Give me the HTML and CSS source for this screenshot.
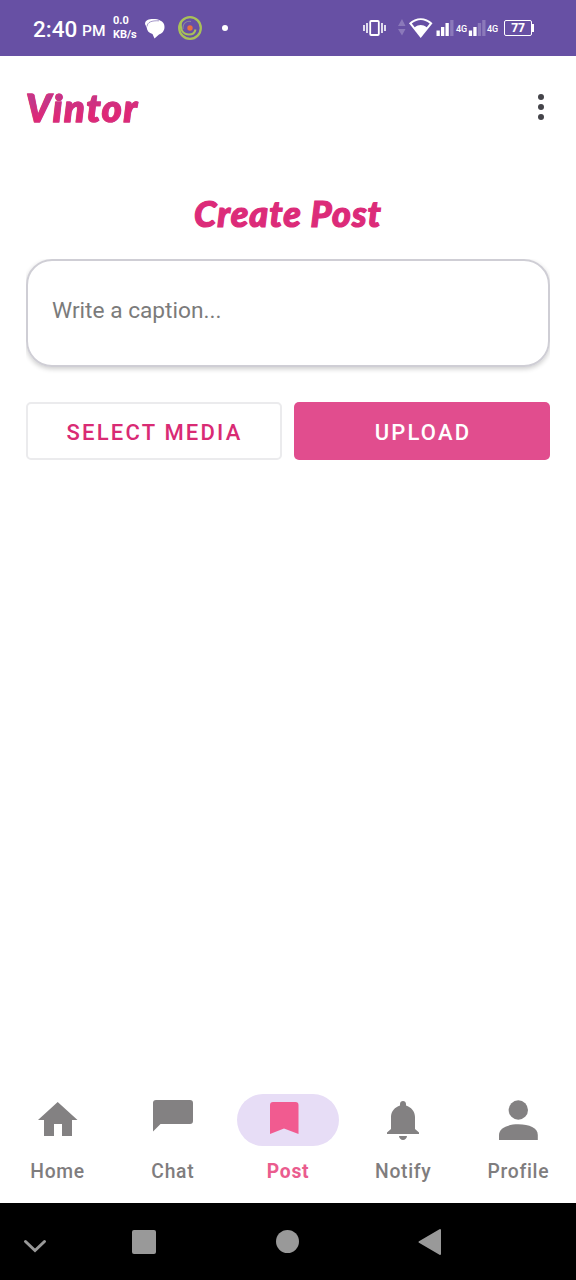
FILE: index.html
```html
<!DOCTYPE html>
<html lang="en">
<head>
<meta charset="utf-8">
<title>Vintor</title>
<link rel="stylesheet" href="styles.css">
</head>
<body>
<div class="screen">
  <header class="status">
    <span class="time">2:40</span>
    <span class="meridiem">PM</span>
    <span class="speed"><span>0.0</span><span>KB/s</span></span>
    <svg class="messages" width="20" height="22" viewBox="0 0 20 22">
      <path fill="#fff" d="M0 6C0 2 4 1 8 1c3 0 5.500 .3 7 1.500C18 3.500 19.500 6 19.500 9c0 4-2.500 6.500-5.500 7.500L9.500 20.500 7.500 16C4 15 2 13 1.700 9.500z"/>
      <path fill="none" stroke="#6750a4" stroke-width=".6" d="M2 8.500C2.500 4 6.500 2.500 14 2.800"/>
    </svg>
    <svg class="spiral" width="26" height="26" viewBox="0 0 26 26">
      <circle cx="13" cy="13" r="10.800" fill="none" stroke="#a9c158" stroke-width="2.300"/>
      <path fill="none" stroke="#a9c158" stroke-width="2" d="M4 7C3 15 6 19.500 12 19.500c3.500 0 6-2 6.500-5"/>
      <path fill="none" stroke="#8a8a98" stroke-width="1.200" d="M6 14C5.500 8 10 5.500 14 6.500"/>
      <circle cx="13" cy="13" r="2.700" fill="#e9713f"/>
    </svg>
    <span class="dot"></span>
    <svg class="vibrate" width="24" height="18" viewBox="0 0 24 18">
      <rect x="7.200" y="2" width="8.600" height="14" rx="1" fill="none" stroke="#fff" stroke-width="1.800"/>
      <path stroke="#fff" stroke-width="1.600" d="M1 6v6M4 4v10M19 4v10M22 6v6"/>
    </svg>
    <svg class="network" width="56" height="22" viewBox="0 0 56 22">
      <path fill="#8b79ba" d="M0 9 4 2l3.500 7zM0 12h7.500L4 18.500z"/>
      <path fill="#fff" d="M11 6.200C18-.3 27.500-.3 34.500 6.200L22.700 21z"/>
      <path fill="#6750a4" d="M13.800 6.500C19.500 1.800 26 1.800 31.700 6.500l-3 3.700c-4-2.800-8-2.800-12 0z"/>
      <path fill="#fff" d="M38.500 13.500h3.300v5.500h-3.300zM43 10h3.300v9H43zM47.500 6h3.300v13h-3.300z"/>
      <path fill="#8b79ba" d="M52.200 3h3.300v16h-3.300z"/>
    </svg>
    <span class="gen">4G</span>
    <svg class="bars" width="18" height="22" viewBox="0 0 18 22">
      <path fill="#fff" d="M.8 13.500h3.300v5.500H.8zM5.300 10h3.300v9H5.300z"/>
      <path fill="#8b79ba" d="M9.800 6h3.300v13H9.800zM14.200 3h3.300v16h-3.300z"/>
    </svg>
    <span class="gen second">4G</span>
    <span class="battery">77</span>
    <span class="nub"></span>
  </header>

  <div class="appbar">
    <h1 class="brand">Vintor</h1>
    <div class="more"><i></i><i></i><i></i></div>
  </div>

  <main class="content">
    <h2 class="heading">Create Post</h2>
    <div class="caption-wrap"><div class="caption">Write a caption...</div></div>
    <div class="actions">
      <div class="button outline">SELECT MEDIA</div>
      <div class="button filled">UPLOAD</div>
    </div>
  </main>

  <nav class="tabs">
    <div class="tab">
      <div class="icon"><svg width="52" height="52" viewBox="0 0 52 52"><path d="M25.700 8 45.500 26H40v16H30V30h-8v12H12V26H6z"/></svg></div>
      <span class="label">Home</span>
    </div>
    <div class="tab">
      <div class="icon"><svg width="52" height="52" viewBox="0 0 52 52"><path d="M9 6h34a3 3 0 0 1 3 3v18a3 3 0 0 1-3 3H13.500L6 37.500V9a3 3 0 0 1 3-3z"/></svg></div>
      <span class="label">Chat</span>
    </div>
    <div class="tab active">
      <div class="icon"><svg width="52" height="52" viewBox="0 0 52 52"><path d="M11 8h22.500a3 3 0 0 1 3 3v29L22 34.500 8 40V11a3 3 0 0 1 3-3z"/></svg></div>
      <span class="label">Post</span>
    </div>
    <div class="tab">
      <div class="icon"><svg width="52" height="52" viewBox="0 0 52 52"><path d="M26 7c1.700 0 3 1.300 3 3v1.500c5 1.500 9 6 9 11.500v12l4 3.500V40H10v-1.500l4-3.500V23c0-5.500 4-10 9-11.500V10c0-1.700 1.300-3 3-3zM22 42h8c0 2-2 4-4 4s-4-2-4-4z"/></svg></div>
      <span class="label">Notify</span>
    </div>
    <div class="tab">
      <div class="icon"><svg width="52" height="52" viewBox="0 0 52 52"><circle cx="26.300" cy="16" r="9.700"/><path d="M7 46v-5c0-7 8.500-10.700 19.400-10.700S45.800 34 45.800 41v5z"/></svg></div>
      <span class="label">Profile</span>
    </div>
  </nav>

  <footer class="system">
    <svg class="hide" width="24" height="14" viewBox="0 0 24 14"><path d="m2.500 2.500 9.500 9 9.500-9" fill="none" stroke="#999" stroke-width="3" stroke-linecap="round"/></svg>
    <span class="square"></span>
    <span class="circle"></span>
    <svg class="back" width="24" height="28" viewBox="0 0 24 28"><path d="M1.500 14 22 2v24z" fill="#999" stroke="#999" stroke-width="2" stroke-linejoin="round"/></svg>
  </footer>
</div>
</body>
</html>
```
FILE: styles.css
```css
* { box-sizing: border-box; }

body {
  margin: 0;
  background: #fff;
  font-family: Roboto, "Liberation Sans", sans-serif;
}

.screen {
  display: flex;
  flex-direction: column;
  width: 576px;
  height: 1280px;
}

.status {
  display: flex;
  align-items: flex-start;
  height: 56px;
  padding-left: 33px;
  background: #6750a4;
  color: #fff;
  white-space: nowrap;
}

.status > * { flex: none; }

.time {
  width: 49px;
  margin-top: 15px;
  font-size: 22.500px;
  font-weight: 500;
  line-height: 28px;
}

.meridiem {
  width: 31px;
  margin-top: 19px;
  font-size: 15.500px;
  font-weight: 500;
  line-height: 24px;
}

.speed {
  display: flex;
  flex-direction: column;
  width: 32px;
  margin-top: 14px;
  font-size: 11px;
  font-weight: 700;
  line-height: 14px;
}

.messages { margin-top: 18px; }
.spiral { margin: 15px 0 0 12px; }

.dot {
  width: 6px;
  height: 6px;
  margin: 25px 0 0 19px;
  border-radius: 50%;
  background: #fff;
}

.vibrate { margin: 19px 0 0 135px; }
.network { margin: 17px 0 0 11px; }

.gen {
  width: 13px;
  margin: 21px 0 0 2px;
  font-size: 9px;
  font-weight: 500;
  line-height: 16px;
}

.bars { margin: 17px 0 0 -1px; }
.gen.second { margin-left: 1px; }

.battery {
  width: 28px;
  height: 16px;
  margin: 20px 0 0 4px;
  border: 1.500px solid #fff;
  border-radius: 2px;
  font-family: "Noto Sans", sans-serif;
  font-size: 12px;
  font-weight: 700;
  line-height: 14px;
  text-align: center;
}

.nub {
  width: 1.500px;
  height: 8px;
  margin-top: 24px;
  background: #fff;
}

.appbar {
  display: flex;
  justify-content: space-between;
  height: 104px;
  padding: 0 32px 0 26px;
}

.brand,
.heading {
  margin: 0;
  color: #dc2b79;
  font-family: Lato, sans-serif;
  font-style: italic;
  font-weight: 900;
  line-height: 48px;
  white-space: nowrap;
}

.brand {
  height: 48px;
  margin-top: 27px;
  padding-right: 3px;
  background: linear-gradient(175deg, #c2378a 35%, #e12775 62%);
  background-clip: text;
  color: transparent;
  font-size: 38px;
  letter-spacing: 1.800px;
  -webkit-text-stroke: 1.200px #d4317f;
}

.more {
  display: flex;
  flex-direction: column;
  gap: 4px;
  margin-top: 38px;
}

.more i {
  width: 6px;
  height: 6px;
  border-radius: 50%;
  background: #45444a;
}

.content {
  flex: 1;
  padding: 29px 26px 0;
}

.heading {
  height: 70px;
  font-size: 36px;
  letter-spacing: 1px;
  text-align: center;
  -webkit-text-stroke: 1.200px #dc2b79;
}

.caption-wrap {
  margin-bottom: 26px;
  padding-bottom: 9px;
  overflow: hidden;
}

.caption {
  height: 108px;
  padding: 36px 24px;
  border: 2px solid #cfced5;
  border-radius: 26px;
  box-shadow: 0 2px 5px rgb(0 0 0 / 20%);
  color: #7b7b7b;
  font-size: 22.700px;
  line-height: 28px;
}

.actions {
  display: grid;
  grid-template-columns: 1fr 1fr;
  gap: 12px;
}

.button {
  height: 58px;
  padding-left: 2px;
  border-radius: 5px;
  font-size: 22px;
  font-weight: 500;
  line-height: 61px;
  letter-spacing: 2.200px;
  text-align: center;
}

.outline {
  padding-left: 1px;
  border: 2px solid #ebebed;
  color: #d92b74;
  line-height: 57px;
}

.filled {
  background: #e14d8e;
  color: #fff;
}

.tabs {
  display: flex;
  height: 109px;
}

.tab {
  display: flex;
  flex: 1;
  flex-direction: column;
  align-items: center;
  color: #7f7d7e;
}

.icon {
  display: flex;
  justify-content: center;
  width: 102px;
  height: 52px;
  border-radius: 26px;
}

.icon svg { fill: #838182; }

.label {
  margin-top: 13px;
  font-size: 19.300px;
  font-weight: 500;
  line-height: 25px;
  letter-spacing: .7px;
}

.active { color: #ea5c8e; }
.active .icon { background: #e7ddf6; }
.active .icon svg { fill: #f15b90; }
.active .label { font-weight: 700; }

.system {
  display: flex;
  align-items: flex-start;
  height: 77px;
  padding-left: 23px;
  background: #000;
}

.hide { margin-top: 36px; }

.square {
  width: 24px;
  height: 24px;
  margin: 27px 0 0 85px;
  border-radius: 2px;
  background: #999;
}

.circle {
  width: 23px;
  height: 23px;
  margin: 27px 0 0 120px;
  border-radius: 50%;
  background: #999;
}

.back { margin: 25px 0 0 119px; }
```
